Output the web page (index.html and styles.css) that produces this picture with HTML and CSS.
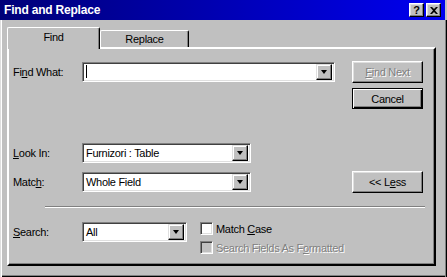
FILE: index.html
```html
<!DOCTYPE html>
<html lang="en">
<head>
  <meta charset="UTF-8" />
  <title>Find and Replace</title>
  <link rel="stylesheet" href="styles.css">
</head>
<body>

  <div class="window">
    <!-- Caption bar -->
    <div class="titlebar">
      <span class="title">Find and Replace</span>
      <div class="caption-buttons">
        <span class="cap-btn help">?</span>
        <span class="cap-btn close">
          <svg width="8" height="7" viewBox="0 0 8 7"><path d="M0 0h2l2 2 2-2h2L5 3.5 8 7H6L4 5 2 7H0l3-3.5z" fill="#000"/></svg>
        </span>
      </div>
    </div>

    <div class="client">
      <!-- Tabs -->
      <div class="tabs">
        <div class="tab active">Find</div>
        <div class="tab">Replace</div>
      </div>

      <div class="panel">
        <div class="row row-find">
          <label class="label">Fi<u>n</u>d What:</label>
          <div class="combo combo-find">
            <span class="caret"></span>
            <span class="drop"><i></i></span>
          </div>
          <button class="btn disabled"><u>F</u>ind Next</button>
        </div>

        <div class="row row-cancel">
          <button class="btn default">Cancel</button>
        </div>

        <div class="row row-look">
          <label class="label"><u>L</u>ook In:</label>
          <div class="combo combo-mid">
            <span class="value">Furnizori : Table</span>
            <span class="drop"><i></i></span>
          </div>
        </div>

        <div class="row row-match">
          <label class="label">Matc<u>h</u>:</label>
          <div class="combo combo-mid">
            <span class="value">Whole Field</span>
            <span class="drop"><i></i></span>
          </div>
          <button class="btn"><<&nbsp;L<u>e</u>ss</button>
        </div>

        <div class="separator"></div>

        <div class="row row-search">
          <label class="label"><u>S</u>earch:</label>
          <div class="combo combo-small">
            <span class="value">All</span>
            <span class="drop"><i></i></span>
          </div>
          <div class="checks">
            <div class="check">
              <span class="box"></span>
              <span>Match <u>C</u>ase</span>
            </div>
            <div class="check disabled">
              <span class="box"></span>
              <span>Search Fields As F<u>o</u>rmatted</span>
            </div>
          </div>
        </div>
      </div>
    </div>
  </div>

</body>
</html>
```

FILE: styles.css
```css
* {
  box-sizing: border-box;
  margin: 0;
  padding: 0;
}

body {
  background-color: #c0c0c0;
  font-family: 'Liberation Sans', Arial, sans-serif;
  font-size: 11px;
  letter-spacing: -0.3px;
  color: #000;
  overflow: hidden;
}

.window {
  width: 447px;
  height: 277px;
  display: flex;
  flex-direction: column;
  background: #c0c0c0;
}

/* caption */
.titlebar {
  height: 20px;
  margin-right: 2px;
  background: linear-gradient(to right, #000078, #0000f0);
  display: flex;
  align-items: center;
  justify-content: space-between;
  padding: 0 4px 0 4px;
}

.title {
  color: #fff;
  font-weight: bold;
  font-size: 12px;
  letter-spacing: -0.2px;
}

.caption-buttons {
  display: flex;
  gap: 2px;
}

.cap-btn {
  width: 15px;
  height: 14px;
  background: #c0c0c0;
  border: 1px solid;
  border-color: #fff #000 #000 #fff;
  box-shadow: inset -1px -1px #808080, inset 1px 1px #dfdfdf;
  display: flex;
  align-items: center;
  justify-content: center;
  font-weight: bold;
  font-size: 11px;
  line-height: 1;
}

/* window frame below caption */
.client {
  flex: 1;
  padding: 7px 11px 0 7px;
  box-shadow: inset 1px 0 #dfdfdf, inset 2px 0 #fff, inset -1px 0 #000, inset -2px 0 #808080, inset 0 -1px #000, inset 0 -2px #808080;
}

.tabs {
  display: flex;
  align-items: flex-end;
  height: 20px;
  position: relative;
  z-index: 1;
}

.tab {
  width: 89px;
  height: 17px;
  border: 1px solid;
  border-bottom: none;
  border-color: #fff #000 #000 #fff;
  box-shadow: inset -1px 0 #808080;
  border-radius: 2px 2px 0 0;
  text-align: center;
  line-height: 17px;
  background: #c0c0c0;
}

.tab.active {
  width: 93px;
  height: 22px;
  margin-bottom: -2px;
  line-height: 18px;
}

.panel {
  height: 219px;
  border: 2px solid;
  border-color: #fff #000 #000 #fff;
  box-shadow: inset -1px -1px #808080;
  padding: 12px 11px 0 4px;
}

.row {
  display: flex;
  align-items: center;
}

.label {
  width: 69px;
}

.row-find { height: 21px; }
.row-cancel { justify-content: flex-end; margin-top: 6px; }
.row-look { margin-top: 34px; }
.row-match { margin-top: 8px; }
.row-search { margin-top: 14px; align-items: flex-start; }
.row-search .label { line-height: 20px; }

.row .btn { margin-left: auto; }

/* sunken drop-down */
.combo {
  height: 20px;
  background: #fff;
  border: 1px solid;
  border-color: #808080 #fff #fff #808080;
  box-shadow: inset 1px 1px #404040, inset -1px -1px #dfdfdf;
  display: flex;
  align-items: center;
  padding: 2px;
}

.combo-find { width: 253px; }
.combo-mid { width: 169px; }
.combo-small { width: 105px; }

.value {
  flex: 1;
  padding-left: 1px;
  white-space: nowrap;
}

.caret {
  width: 1px;
  height: 13px;
  background: #000;
  margin-left: 1px;
}

.drop {
  margin-left: auto;
  width: 16px;
  height: 16px;
  background: #c0c0c0;
  border: 1px solid;
  border-color: #dfdfdf #000 #000 #dfdfdf;
  box-shadow: inset -1px -1px #808080, inset 1px 1px #fff;
  display: flex;
  align-items: center;
  justify-content: center;
}

.drop i {
  width: 0;
  height: 0;
  border-left: 3.5px solid transparent;
  border-right: 3.5px solid transparent;
  border-top: 4px solid #000;
}

/* push buttons */
.btn {
  width: 71px;
  height: 22px;
  background: #c0c0c0;
  font-family: inherit;
  font-size: 11px;
  letter-spacing: -0.3px;
  border: 1px solid;
  border-color: #fff #000 #000 #fff;
  box-shadow: inset -1px -1px #808080, inset 1px 1px #dfdfdf;
}

.btn.default {
  border: 1px solid #000;
  box-shadow: inset 1px 1px #fff, inset -1px -1px #000, inset -2px -2px #808080;
  height: 21px;
}

.btn.disabled,
.check.disabled {
  color: #808080;
  text-shadow: 1px 1px #fff;
}

.separator {
  height: 2px;
  margin: 13px -2px 0 32px;
  border-top: 1px solid #808080;
  border-bottom: 1px solid #fff;
}

/* check boxes */
.checks {
  margin-left: 13px;
  display: flex;
  flex-direction: column;
  gap: 6px;
}

.check {
  display: flex;
  align-items: center;
  gap: 3px;
  height: 13px;
}

.box {
  width: 13px;
  height: 13px;
  background: #fff;
  border: 1px solid;
  border-color: #808080 #fff #fff #808080;
  box-shadow: inset 1px 1px #404040, inset -1px -1px #dfdfdf;
}

.check.disabled .box {
  background: #c0c0c0;
}
```
